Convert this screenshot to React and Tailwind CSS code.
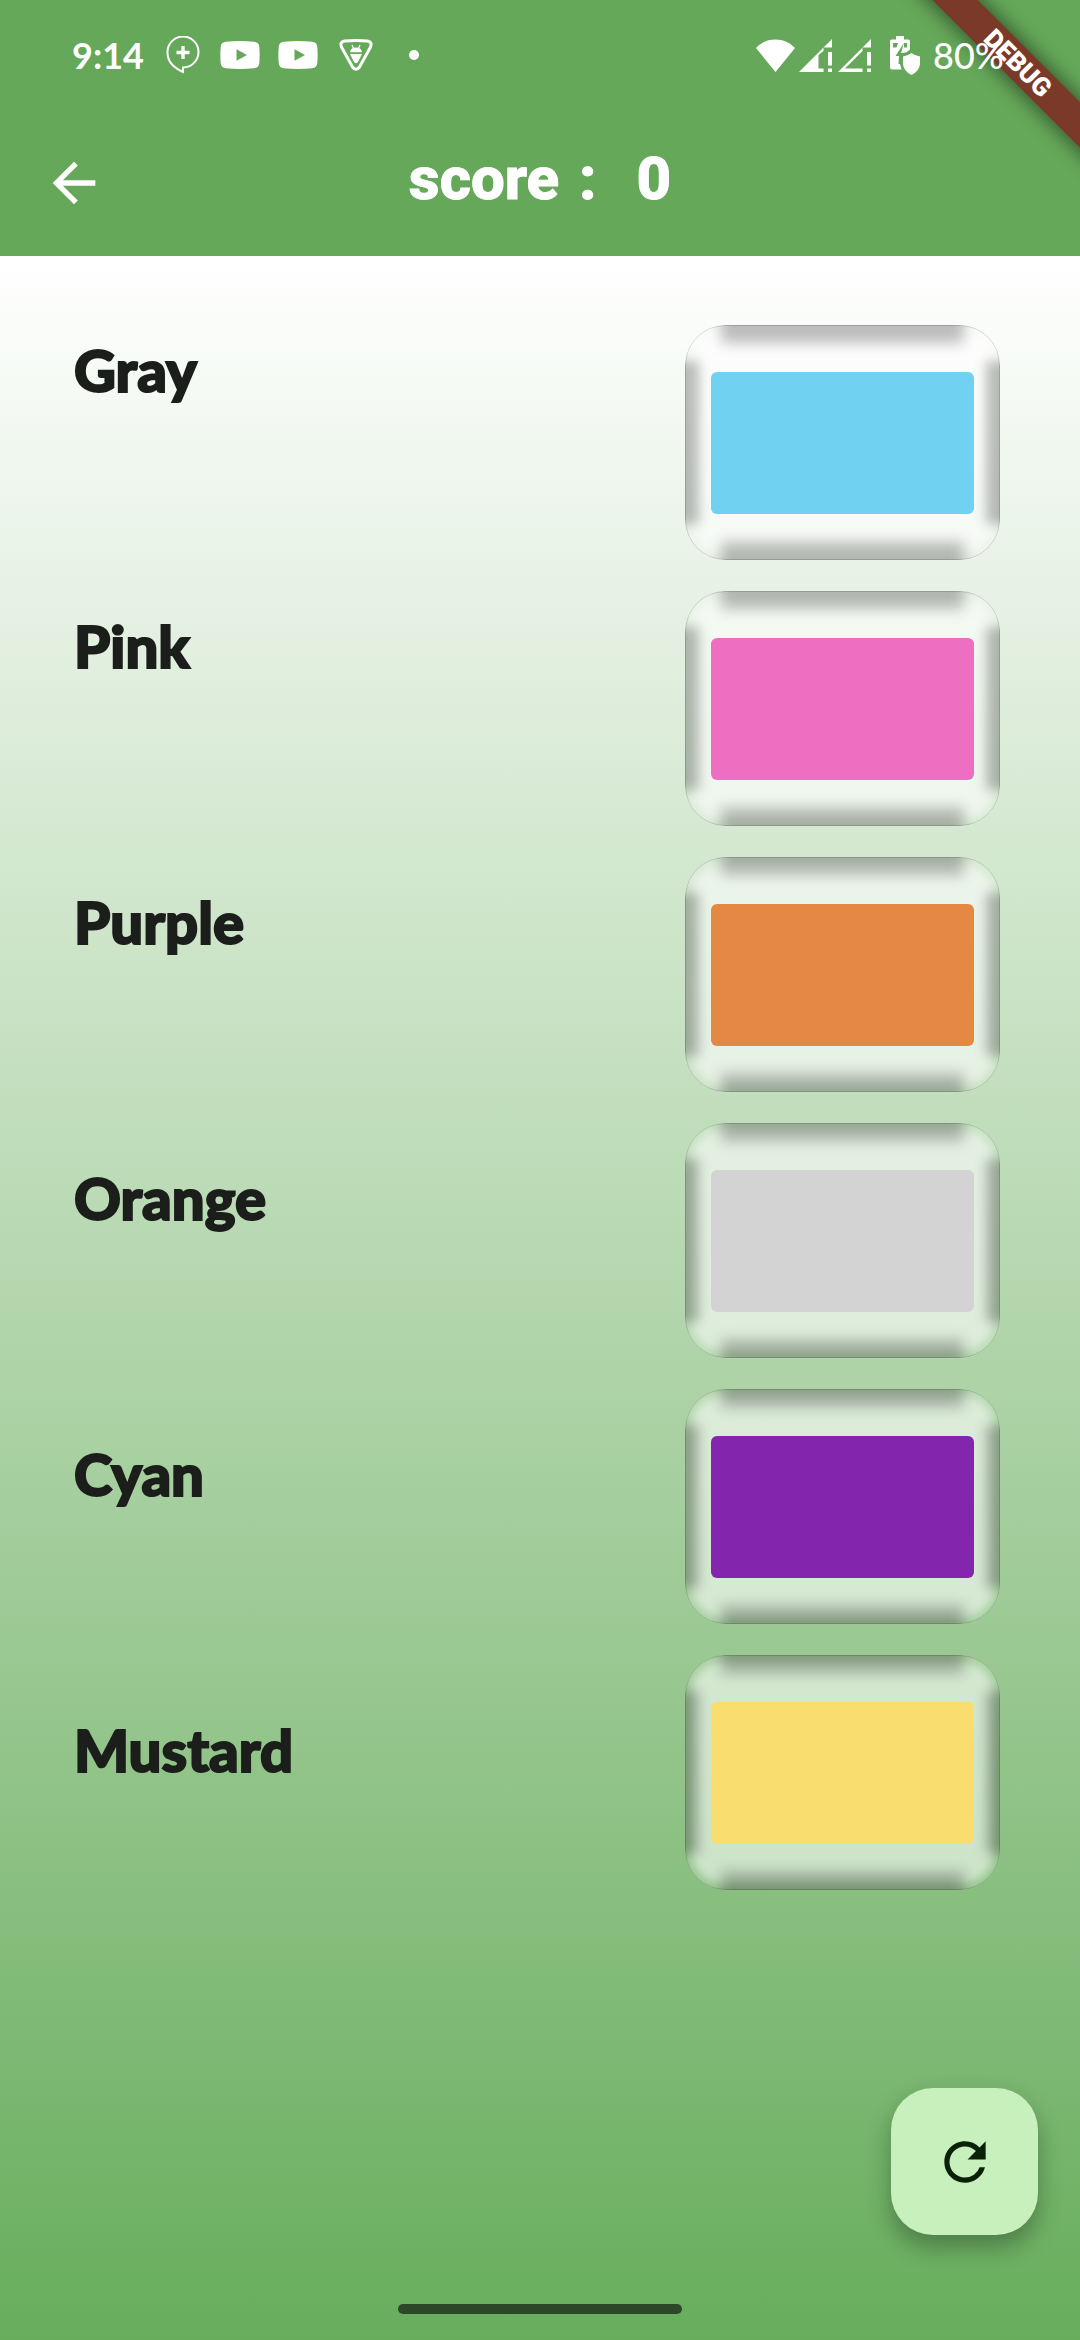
import React from "react";
import { MdArrowBack, MdRefresh } from "react-icons/md";

const rows = [
  { label: "Gray", swatch: "bg-[#70d1f1]", name: "Cyan swatch" },
  { label: "Pink", swatch: "bg-[#ee6fc2]", name: "Pink swatch" },
  { label: "Purple", swatch: "bg-[#e58844]", name: "Orange swatch" },
  { label: "Orange", swatch: "bg-[#d3d3d3]", name: "Gray swatch" },
  { label: "Cyan", swatch: "bg-[#8426ad]", name: "Purple swatch" },
  { label: "Mustard", swatch: "bg-[#f9dd6f]", name: "Mustard swatch" },
];

function ChatPlus() {
  return (
    <svg className="h-[38px] w-[34px]" viewBox="0 0 34 38" fill="none" stroke="currentColor">
      <path d="M17 31.500V36C8 32 1.500 26 1.500 16.500a15.500 15.500 0 1 1 15.500 15z" strokeWidth="2" />
      <path d="M17 10v13M10.500 16.500h13" strokeWidth="3.400" />
    </svg>
  );
}

function Video() {
  return (
    <svg className="h-[28px] w-[40px]" viewBox="0 0 40 28" fill="currentColor" fillRule="evenodd">
      <path d="M6 .8Q20-.7 34 .8Q39 1.200 39.300 6Q40 14 39.300 22Q39 26.800 34 27.200Q20 28.700 6 27.200Q1 26.800.7 22Q0 14 .7 6Q1 1.200 6 .8ZM16.500 8.300v11.400L27 14Z" />
    </svg>
  );
}

function BugTriangle() {
  return (
    <svg className="h-[32px] w-[34px]" viewBox="0 0 34 32" fill="none" stroke="currentColor">
      <path d="M5.500 2Q17 1 28.500 2Q33.500 3 31.500 8L20.500 28Q17 32.500 13.500 28L2.500 8Q.5 3 5.500 2Z" strokeWidth="3" />
      <path d="M11 13.200Q11.500 8.500 17 8.500T23 13.200ZM11 15H23L19.500 22Q17 26.500 14.500 22Z" fill="currentColor" stroke="none" />
      <path d="M13 6l1.500 3.500M21 6l-1.500 3.500" strokeWidth="1.200" />
    </svg>
  );
}

function Wifi() {
  return (
    <svg className="h-[33px] w-[39px]" viewBox="0 0 39 33" fill="currentColor">
      <path d="M0 9Q7.500.5 19.500.5T39 9L19.500 33Z" />
    </svg>
  );
}

function Signal({ filled }) {
  return (
    <svg className="h-[33px] w-[33px]" viewBox="0 0 33 33" fill="currentColor">
      <path d={filled ? "M0 33L24.500 8.500V12L19.500 16V29.500H24.500V33Z" : "M0 33L24.500 8.500V12L7 29.500H24.500V33Z"} />
      <path d="M33 0V8.500H24.500ZM29 13H33V26.500H29ZM29 29.500H33V33H29Z" />
    </svg>
  );
}

function BatteryShield() {
  return (
    <svg className="h-[39px] w-[31px]" viewBox="0 0 31 39" fill="currentColor" fillRule="evenodd">
      <path d="M6 0H14V3.500H18Q20 3.500 20 5.500V13.500L16 16.500L11 17L14 7L5.500 20H9L8.500 28H10L11.500 33.500H2Q0 33.500 0 31.500V5.500Q0 3.500 2 3.500H6ZM3 7V11.500H6.500L8 7ZM14 7V11.500H17V7Z" />
      <path d="M21.500 17Q25.500 20 30 20.500V28Q29.500 35 21.500 39Q13.500 35 13 28V20.500Q17.500 20 21.500 17Z" />
    </svg>
  );
}

function StatusBar() {
  return (
    <div className="relative flex h-[110px] items-center justify-between pr-[74px] pl-[72px]">
      <div className="flex items-center">
        <span className="w-[94px] font-['Lato','Open_Sans',sans-serif] text-[36px] leading-none font-bold">9:14</span>
        <ChatPlus />
        <div className="ml-5 flex gap-[18px]">
          <Video />
          <Video />
        </div>
        <div className="ml-[21px] flex items-center gap-9">
          <BugTriangle />
          <span className="size-[10px] rounded-full bg-white" />
        </div>
      </div>
      <div className="flex items-center">
        <Wifi />
        <div className="ml-1 flex gap-1.5">
          <Signal filled />
          <Signal />
        </div>
        <div className="ml-[19px] flex items-center gap-3">
          <BatteryShield />
          <span className="w-[73px] font-['Lato','Open_Sans',sans-serif] text-[36px] leading-none font-medium">80%</span>
        </div>
      </div>
    </div>
  );
}

function DebugRibbon() {
  return (
    <div className="pointer-events-none absolute top-0 right-0 size-[190px] overflow-hidden">
      <div className="absolute top-[47px] -right-[88px] flex h-8 w-[300px] rotate-45 items-center justify-center bg-[#7b3a29] font-['Roboto',sans-serif] text-[26px] font-black shadow-[0_0_18px_4px_rgba(0,0,0,0.45)]">
        DEBUG
      </div>
    </div>
  );
}

function ColorTile({ row }) {
  return (
    <button
      type="button"
      aria-label={row.name}
      className="relative flex h-[235px] items-center justify-center overflow-hidden rounded-[40px] bg-white/15"
    >
      <span className="absolute inset-[6px] rounded-[34px] bg-white/50 blur-[4px]" />
      <span className="absolute inset-x-[36px] -top-5 h-[38px] bg-black/25 blur-[7px]" />
      <span className="absolute inset-x-[36px] -bottom-5 h-[38px] bg-black/25 blur-[7px]" />
      <span className="absolute inset-y-[36px] -left-5 w-[34px] bg-black/25 blur-[6px]" />
      <span className="absolute inset-y-[36px] -right-5 w-[34px] bg-black/25 blur-[6px]" />
      <span className="absolute inset-0 rounded-[40px] border border-black/15" />
      <span className={`relative h-[142px] w-[263px] rounded-md ${row.swatch}`} />
    </button>
  );
}

export default function App() {
  return (
    <div className="flex min-h-screen flex-col font-['Lato','Open_Sans',sans-serif]">
      <header className="relative h-64 bg-[#65a859] text-white">
        <DebugRibbon />
        <StatusBar />
        <div className="grid h-[146px] grid-cols-[1fr_auto_1fr] items-center px-[42px]">
          <button type="button" aria-label="Back" className="flex size-[64px] items-center justify-center">
            <MdArrowBack className="size-[64px]" />
          </button>
          <h1 className="flex items-center gap-5 pb-2 font-['Roboto',sans-serif] text-[60px] leading-none font-extrabold [-webkit-text-stroke:1px_white]">
            <span>score</span>
            <span>:</span>
            <span className="pl-5">0</span>
          </h1>
        </div>
      </header>

      <div className="flex flex-1 flex-col bg-linear-to-b from-white to-[#67ad5c]">
        <main className="flex flex-1 items-start justify-between pr-20 pl-[74px]">
          <ul className="mt-[70px]">
            {rows.map((row) => (
              <li
                key={row.label}
                className="h-[276px] text-[58px] leading-[88px] font-black text-[#1b1e1a] [-webkit-text-stroke:2px_#1b1e1a]"
              >
                {row.label}
              </li>
            ))}
          </ul>
          <div className="mt-[69px] flex w-[315px] flex-col gap-[31px]">
            {rows.map((row) => (
              <ColorTile key={row.label} row={row} />
            ))}
          </div>
        </main>

        <footer className="flex flex-col items-center pb-[26px]">
          <button
            type="button"
            aria-label="Restart"
            className="mr-[42px] mb-[69px] flex size-[147px] items-center justify-center self-end rounded-[42px] bg-[#c8f0bc] text-[#0a2009] shadow-[0_12px_24px_rgba(0,0,0,0.3)]"
          >
            <MdRefresh className="size-[62px]" />
          </button>
          <div className="h-[10px] w-[284px] rounded-full bg-[#2b4727]" />
        </footer>
      </div>
    </div>
  );
}
